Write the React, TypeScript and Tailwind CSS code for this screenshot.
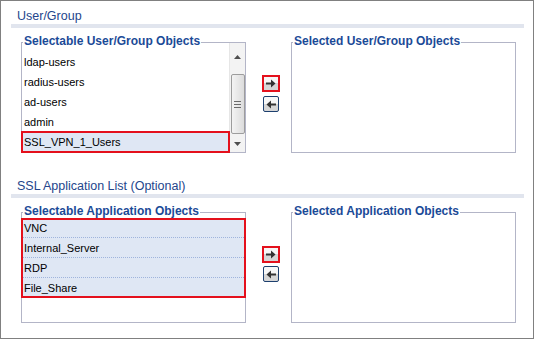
import React from "react";

const font = { fontFamily: '"Liberation Sans", Arial, sans-serif' };

function ArrowButton({ dir, active }: { dir: "right" | "left"; active?: boolean }) {
  return (
    <button
      type="button"
      className={
        active
          ? "flex h-[17px] w-[18px] items-center justify-center border-2 border-[#e4101c] bg-gradient-to-b from-[#f7f7f7] from-50% to-[#d6d6d6] to-50%"
          : "ml-px flex h-[16px] w-[16px] items-center justify-center rounded-[2px] border border-[#1d3f6e] bg-gradient-to-b from-[#f7f7f7] from-50% to-[#d6d6d6] to-50%"
      }
    >
      <svg width="10" height="9" viewBox="0 0 10 9">
        {dir === "right" ? (
          <path d="M0 3.5h5V0.5l4.5 4-4.5 4V5.5H0z" fill="#333" />
        ) : (
          <path d="M10 3.5H5V0.5L0.5 4.5 5 8.5V5.5h5z" fill="#333" />
        )}
      </svg>
    </button>
  );
}

function Box({ legend, children }: { legend: string; children?: React.ReactNode }) {
  return (
    <div className="relative h-[111px] w-[225px] shrink-0 border border-[#b3b5c7]">
      <span className="absolute -top-[9px] left-[1px] bg-white px-[1px] text-[12px] font-bold leading-[14px] text-[#1b4a97]">
        {legend}
      </span>
      {children}
    </div>
  );
}

function Heading({ text }: { text: string }) {
  return (
    <>
      <div className="ml-[6px] h-[16px] text-[12.5px] leading-[16px] text-[#24468c]">{text}</div>
      <div className="h-[4px] bg-[#e1e5ee]" />
    </>
  );
}

function Scrollbar() {
  return (
    <div className="flex w-[16px] flex-col border-l border-[#e6e6e6] bg-[#f3f3f3]">
      <div className="flex h-[31px] justify-center pt-[12px]">
        <svg width="7" height="4" viewBox="0 0 7 4">
          <path d="M0 4L3.5 0 7 4z" fill="#4f4f4f" />
        </svg>
      </div>
      <div className="mx-auto flex h-[60px] w-[14px] flex-col items-center justify-center gap-[2px] rounded-[2px] border border-[#9d9d9d] bg-gradient-to-r from-[#f4f4f4] to-[#dcdcdc]">
        <div className="h-px w-[7px] bg-[#6b6b6b]" />
        <div className="h-px w-[7px] bg-[#6b6b6b]" />
        <div className="h-px w-[7px] bg-[#6b6b6b]" />
      </div>
      <div className="flex flex-1 justify-center pt-[8px]">
        <svg width="7" height="4" viewBox="0 0 7 4">
          <path d="M0 0L3.5 4 7 0z" fill="#4f4f4f" />
        </svg>
      </div>
    </div>
  );
}

const users = ["ldap-users", "radius-users", "ad-users", "admin"];
const apps = ["VNC", "Internal_Server", "RDP", "File_Share"];

export default function App() {
  return (
    <div style={font} className="h-[339px] w-[534px] overflow-hidden border border-[#808080] bg-white text-black">
      {/* User/Group */}
      <section className="pl-[10px] pr-[9px] pt-[7px]">
        <Heading text="User/Group" />
        <div className="mt-[14px] flex pl-[10px]">
          <Box legend="Selectable User/Group Objects">
            <div className="flex h-full">
              <div className="flex-1 pt-[9px] text-[11px] leading-[20px]">
                {users.map((u) => (
                  <div key={u} className="h-[20px] pl-[2px]">
                    {u}
                  </div>
                ))}
                <div className="relative z-10 h-[20px] bg-[#dfe7f4] pl-[2px] outline-2 -outline-offset-1 outline-[#e4101c]">
                  SSL_VPN_1_Users
                </div>
              </div>
              <Scrollbar />
            </div>
          </Box>
          <div className="flex w-[45px] shrink-0 flex-col gap-[4px] pl-[16px] pt-[33px]">
            <ArrowButton dir="right" active />
            <ArrowButton dir="left" />
          </div>
          <Box legend="Selected User/Group Objects" />
        </div>
      </section>

      {/* SSL Application List */}
      <section className="pl-[10px] pr-[9px] pt-[25px]">
        <Heading text="SSL Application List (Optional)" />
        <div className="mt-[14px] flex pl-[10px]">
          <Box legend="Selectable Application Objects">
            <div className="-mx-px mt-[5px] bg-[#dfe7f4] text-[11px] leading-[19px] outline-2 -outline-offset-2 outline-[#e4101c]">
              {apps.map((a, i) => (
                <div
                  key={a}
                  className={
                    i < apps.length - 1
                      ? "h-[20px] border-b border-dotted border-[#9fb4dc] pl-[3px] pt-px"
                      : "h-[20px] pl-[3px] pt-px"
                  }
                >
                  {a}
                </div>
              ))}
            </div>
          </Box>
          <div className="flex w-[45px] shrink-0 flex-col gap-[3px] pl-[16px] pt-[34px]">
            <ArrowButton dir="right" active />
            <ArrowButton dir="left" />
          </div>
          <Box legend="Selected Application Objects" />
        </div>
      </section>
    </div>
  );
}
